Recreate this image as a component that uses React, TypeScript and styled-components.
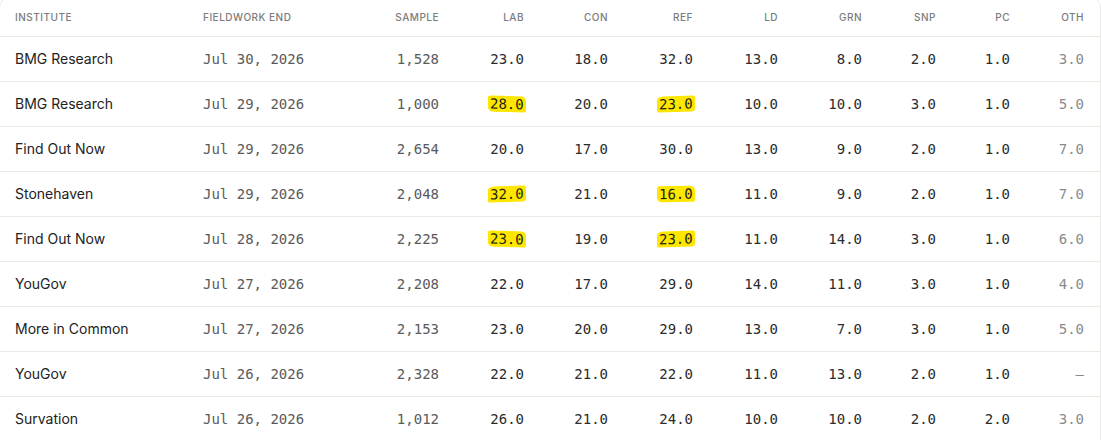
import React from "react";
import styled, { createGlobalStyle } from "styled-components";

const Global = createGlobalStyle`
  html, body { margin: 0; padding: 0; background: #ffffff; }
  body { font-family: Inter, "Noto Sans", sans-serif; overflow: hidden; }
`;

const Card = styled.div`
  margin: -4px 0 0 -1px;
  width: 1102px;
  min-height: 470px;
  box-sizing: border-box;
  border: 1px solid #ebeae7;
  border-radius: 12px;
  background: #fff;
  overflow: hidden;
`;

const Table = styled.table`
  width: 1100px;
  border-collapse: collapse;
  table-layout: fixed;
`;

const Th = styled.th<{ $align?: "left" | "right"; $pl?: number }>`
  text-align: ${(p) => p.$align ?? "right"};
  font-family: Inter, "Noto Sans", sans-serif;
  font-size: 10px;
  font-weight: 500;
  letter-spacing: 0.05em;
  text-transform: uppercase;
  color: #7b7b7b;
  line-height: 16px;
  padding: 12px 16px 11px ${(p) => p.$pl ?? 16}px;
  border-bottom: 1px solid #ebeae7;
  white-space: nowrap;
`;

const Row = styled.tr`
  & + & td { border-top: 1px solid #ebeae7; }
`;

const Td = styled.td<{ $align?: "left" | "right"; $pl?: number; $mono?: boolean; $tone?: "dark" | "mid" | "light" }>`
  text-align: ${(p) => p.$align ?? "right"};
  font-family: ${(p) => (p.$mono ? `"DejaVu Sans Mono", monospace` : `Inter, "Noto Sans", sans-serif`)};
  font-size: 14px;
  line-height: 20px;
  height: 20px;
  padding: 12px 16px 12px ${(p) => p.$pl ?? 16}px;
  color: ${(p) => (p.$tone === "light" ? "#8a8a8a" : p.$tone === "mid" ? "#5a5a5a" : p.$mono ? "#2b2b2b" : "#222222")};
  white-space: nowrap;
`;

const Mark = styled.span<{ $v: number }>`
  display: inline-block;
  background: #ffe600;
  color: #1c1f10;
  padding: 0 2px;
  margin: 0 -2px;
  line-height: 16px;
  border-radius: ${(p) =>
    p.$v === 0
      ? "6px 2px 3px 2px / 4px 2px 3px 2px"
      : p.$v === 1
      ? "3px 4px 2px 6px / 2px 5px 2px 4px"
      : "2px 6px 3px 4px / 3px 4px 2px 5px"};
  transform: ${(p) => (p.$v === 0 ? "skewY(-2deg)" : p.$v === 1 ? "skewY(1.5deg)" : "skewY(-1deg)")};
`;

type Poll = {
  inst: string;
  date: string;
  sample: string;
  v: string[];
  hl?: number[];
};

const polls: Poll[] = [
  { inst: "BMG Research", date: "Jul 30, 2026", sample: "1,528", v: ["23.0", "18.0", "32.0", "13.0", "8.0", "2.0", "1.0", "3.0"] },
  { inst: "BMG Research", date: "Jul 29, 2026", sample: "1,000", v: ["28.0", "20.0", "23.0", "10.0", "10.0", "3.0", "1.0", "5.0"], hl: [0, 2] },
  { inst: "Find Out Now", date: "Jul 29, 2026", sample: "2,654", v: ["20.0", "17.0", "30.0", "13.0", "9.0", "2.0", "1.0", "7.0"] },
  { inst: "Stonehaven", date: "Jul 29, 2026", sample: "2,048", v: ["32.0", "21.0", "16.0", "11.0", "9.0", "2.0", "1.0", "7.0"], hl: [0, 2] },
  { inst: "Find Out Now", date: "Jul 28, 2026", sample: "2,225", v: ["23.0", "19.0", "23.0", "11.0", "14.0", "3.0", "1.0", "6.0"], hl: [0, 2] },
  { inst: "YouGov", date: "Jul 27, 2026", sample: "2,208", v: ["22.0", "17.0", "29.0", "14.0", "11.0", "3.0", "1.0", "4.0"] },
  { inst: "More in Common", date: "Jul 27, 2026", sample: "2,153", v: ["23.0", "20.0", "29.0", "13.0", "7.0", "3.0", "1.0", "5.0"] },
  { inst: "YouGov", date: "Jul 26, 2026", sample: "2,328", v: ["22.0", "21.0", "22.0", "11.0", "13.0", "2.0", "1.0", "—"] },
  { inst: "Survation", date: "Jul 26, 2026", sample: "1,012", v: ["26.0", "21.0", "24.0", "10.0", "10.0", "2.0", "2.0", "3.0"] },
];

const parties = ["LAB", "CON", "REF", "LD", "GRN", "SNP", "PC", "OTH"];
const widths = [187, 134, 134, 85, 84, 85, 85, 84, 74, 74, 74];

export default function App() {
  return (
    <>
      <Global />
      <Card>
        <Table>
          <colgroup>
            {widths.map((w, i) => (
              <col key={i} style={{ width: w }} />
            ))}
          </colgroup>
          <thead>
            <tr>
              <Th $align="left" $pl={15}>Institute</Th>
              <Th $align="left">Fieldwork End</Th>
              <Th>Sample</Th>
              {parties.map((p) => (
                <Th key={p}>{p}</Th>
              ))}
            </tr>
          </thead>
          <tbody>
            {polls.map((r, ri) => (
              <Row key={ri}>
                <Td $align="left" $pl={15}>{r.inst}</Td>
                <Td $align="left" $mono $tone="mid">{r.date}</Td>
                <Td $mono $tone="mid">{r.sample}</Td>
                {r.v.map((val, i) => (
                  <Td key={i} $mono $tone={i === 7 ? "light" : "dark"}>
                    {r.hl && r.hl.includes(i) ? <Mark $v={(ri + i) % 3}>{val}</Mark> : val}
                  </Td>
                ))}
              </Row>
            ))}
          </tbody>
        </Table>
      </Card>
    </>
  );
}
